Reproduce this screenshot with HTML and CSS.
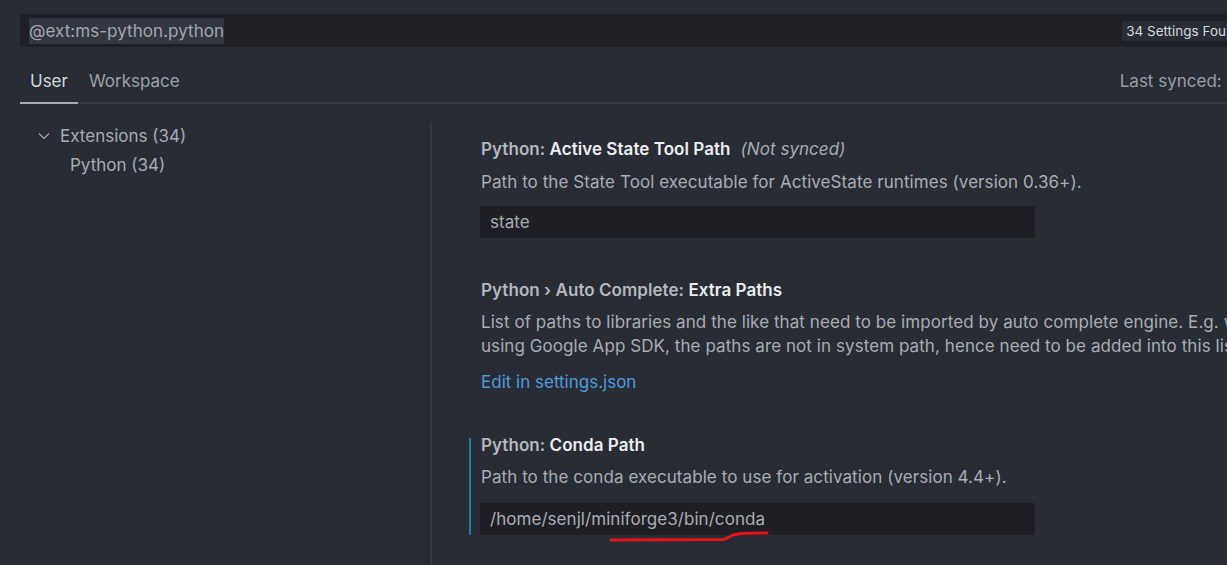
FILE: index.html
```html
<!DOCTYPE html>
<html>
<head>
<meta charset="utf-8">
<link rel="stylesheet" href="styles.css">
</head>
<body>
<div class="page">
  <div class="search">
    <span class="query">@ext:ms-python.python</span>
    <span class="badge">34 Settings Found</span>
  </div>
  <div class="tabs">
    <div class="tab active">User</div>
    <div class="tab">Workspace</div>
    <div class="synced">Last synced: 2 hours ago</div>
  </div>
  <div class="main">
    <div class="toc">
      <div class="toc-row group">
        <svg class="chev" width="14" height="14" viewBox="0 0 14 14"><path d="M2 4.5 L7 9.5 L12 4.5" fill="none" stroke="#a3a7ae" stroke-width="1.2"/></svg>
        <span>Extensions (34)</span>
      </div>
      <div class="toc-row child">Python (34)</div>
    </div>
    <div class="list">
      <div class="setting s1">
        <div class="title"><span class="cat">Python: </span><span class="name">Active State Tool Path</span><span class="note">(Not synced)</span></div>
        <div class="desc">Path to the State Tool executable for ActiveState runtimes (version 0.36+).</div>
        <div class="input">state</div>
      </div>
      <div class="setting s2">
        <div class="title"><span class="cat">Python › Auto Complete: </span><span class="name">Extra Paths</span></div>
        <div class="desc">
          <span class="line">List of paths to libraries and the like that need to be imported by auto complete engine. E.g. when</span>
          <span class="line">using Google App SDK, the paths are not in system path, hence need to be added into this list.</span>
        </div>
        <a class="link">Edit in settings.json</a>
      </div>
      <div class="setting s3 focused">
        <div class="title"><span class="cat">Python: </span><span class="name">Conda Path</span></div>
        <div class="desc">Path to the conda executable to use for activation (version 4.4+).</div>
        <div class="input">/home/senjl/miniforge3/bin/conda</div>
        <svg class="scribble" width="170" height="12" viewBox="0 0 170 12"><path d="M2 9 L115 8.5 L124 4 L132 2.5 L158 2" fill="none" stroke="#e8131b" stroke-width="3" stroke-linecap="round" stroke-linejoin="round"/></svg>
      </div>
    </div>
  </div>
</div>
</body>
</html>
```
FILE: styles.css
```css
html, body {
  margin: 0;
  padding: 0;
  background: #282c35;
  overflow: hidden;
}
.page {
  width: 1227px;
  height: 565px;
  overflow: hidden;
  font-family: Inter, "Noto Sans", sans-serif;
  color: #a9adb4;
  padding-top: 14px;
  box-sizing: border-box;
}
.search {
  margin-left: 20px;
  width: 1300px;
  height: 33px;
  background: #1e2026;
  border-radius: 2px;
  display: flex;
  align-items: center;
  box-sizing: border-box;
  padding-left: 9px;
}
.query {
  font-size: 17px;
  line-height: 26px;
  color: #a3a7ae;
  background: #313641;
  letter-spacing: 0.05px;
}
.badge {
  margin-left: 898px;
  font-size: 13.5px;
  line-height: 20px;
  padding: 0 4px;
  background: #282c34;
  color: #d6d9de;
  border-radius: 2px;
  white-space: nowrap;
}
.tabs {
  margin-left: 20px;
  margin-top: 14px;
  width: 1300px;
  display: flex;
  align-items: flex-end;
  border-bottom: 2px solid #363a45;
  height: 41px;
}
.tab {
  padding: 0 10px;
  height: 41px;
  line-height: 41px;
  font-size: 17px;
  color: #9da1a9;
  box-sizing: border-box;
}
.tab + .tab {
  padding-left: 11px;
}
.tab.active {
  color: #d3d7dd;
  border-bottom: 2px solid #a9acb2;
  margin-bottom: -2px;
  height: 43px;
}
.synced {
  margin-left: 930px;
  line-height: 41px;
  height: 41px;
  font-size: 17px;
  color: #9a9ea6;
  white-space: nowrap;
}
.main {
  display: flex;
  margin-top: 18px;
}
.toc {
  width: 430px;
  flex: none;
  margin-top: -1px;
}
.toc-row {
  display: flex;
  align-items: center;
  height: 29px;
  font-size: 17px;
  color: #a7abb2;
  white-space: nowrap;
}
.toc-row.group {
  padding-left: 37px;
}
.chev {
  margin-right: 9px;
}
.toc-row.child {
  padding-left: 70px;
}
.list {
  border-left: 2px solid #343844;
  padding-left: 49px;
  height: 460px;
  flex: none;
  width: 900px;
}
.setting {
  position: relative;
}
.title {
  font-size: 17px;
  line-height: 22px;
  font-weight: 600;
  color: #b4b8bf;
  white-space: nowrap;
  letter-spacing: 0.05px;
}
.title .name {
  color: #eceef1;
}
.title .note {
  font-style: italic;
  font-weight: 400;
  color: #a9adb4;
  margin-left: 10px;
}
.desc {
  font-size: 17px;
  line-height: 24px;
  color: #a9adb4;
  white-space: nowrap;
  letter-spacing: 0.07px;
}
.desc .line {
  display: block;
}
.input {
  width: 555px;
  height: 32px;
  margin-left: -1px;
  box-sizing: border-box;
  background: #1e1f24;
  color: #a9adb4;
  font-size: 17px;
  line-height: 32px;
  padding-left: 10px;
  letter-spacing: 0.05px;
}
.link {
  display: block;
  font-size: 17px;
  line-height: 24px;
  color: #4e9ad8;
}
.s1 {
  padding-top: 16px;
}
.s1 .desc { margin-top: 10px; }
.s1 .input { margin-top: 12px; }
.s2 {
  padding-top: 41px;
}
.s2 .desc { margin-top: 9px; }
.s2 .link { margin-top: 12px; }
.s3 {
  padding-top: 40px;
}
.s3 .desc { margin-top: 9px; }
.s3 .input { margin-top: 14px; }
.focused::before {
  content: "";
  position: absolute;
  left: -12px;
  top: 44px;
  bottom: 0;
  width: 2px;
  background: #1b81a8;
}
.scribble {
  position: absolute;
  left: 128px;
  top: 137px;
}
```
